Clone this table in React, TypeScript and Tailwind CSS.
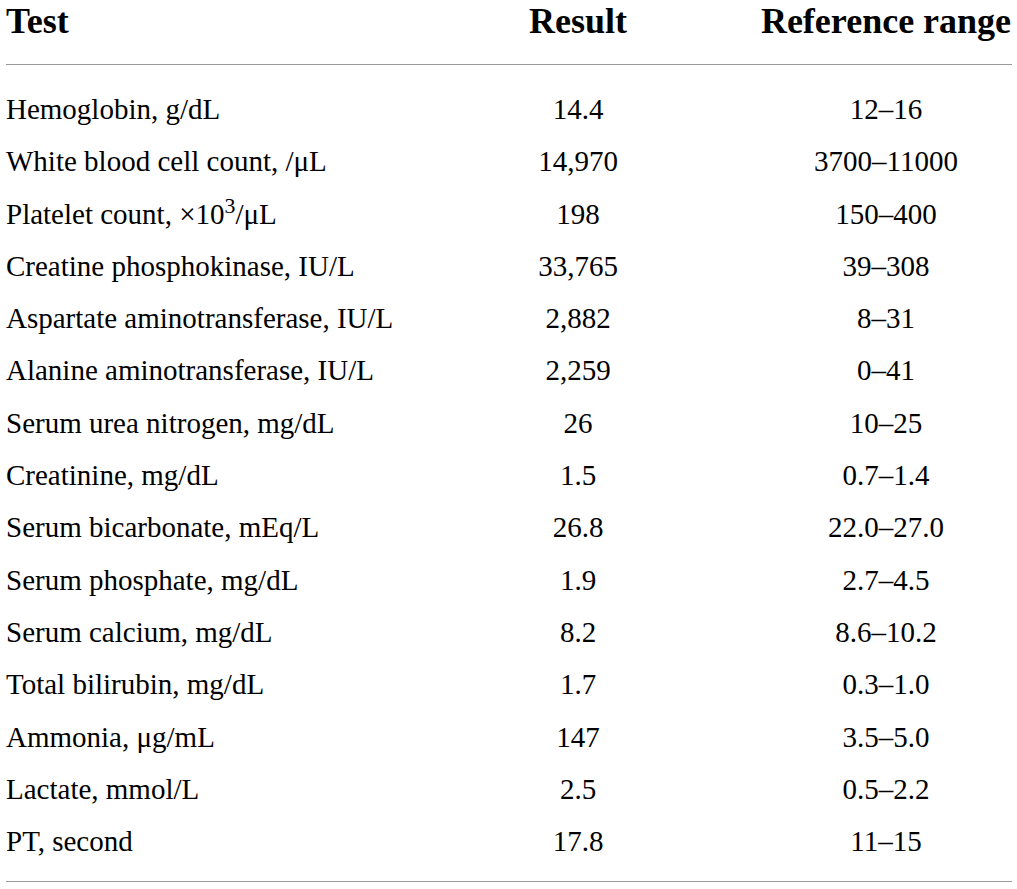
import React from "react";

const rows: [React.ReactNode, string, string][] = [
  ["Hemoglobin, g/dL", "14.4", "12–16"],
  ["White blood cell count, /μL", "14,970", "3700–11000"],
  [
    <>
      Platelet count, ×10<sup>3</sup>/μL
    </>,
    "198",
    "150–400",
  ],
  ["Creatine phosphokinase, IU/L", "33,765", "39–308"],
  ["Aspartate aminotransferase, IU/L", "2,882", "8–31"],
  ["Alanine aminotransferase, IU/L", "2,259", "0–41"],
  ["Serum urea nitrogen, mg/dL", "26", "10–25"],
  ["Creatinine, mg/dL", "1.5", "0.7–1.4"],
  ["Serum bicarbonate, mEq/L", "26.8", "22.0–27.0"],
  ["Serum phosphate, mg/dL", "1.9", "2.7–4.5"],
  ["Serum calcium, mg/dL", "8.2", "8.6–10.2"],
  ["Total bilirubin, mg/dL", "1.7", "0.3–1.0"],
  ["Ammonia, μg/mL", "147", "3.5–5.0"],
  ["Lactate, mmol/L", "2.5", "0.5–2.2"],
  ["PT, second", "17.8", "11–15"],
];

export default function App() {
  return (
    <div
      className="w-[1017px] h-[889px] bg-white text-black pl-[6px] pr-[5px]"
      style={{ fontFamily: '"Liberation Serif", "Times New Roman", serif' }}
    >
      <div className="grid grid-cols-[424px_296px_286px] pt-[1px] pb-[23px] border-b border-[#9a9a9a] text-[36px] leading-[40px] font-bold">
        <div>Test</div>
        <div className="text-center">Result</div>
        <div className="text-center pl-[34px] whitespace-nowrap">Reference range</div>
      </div>
      <div className="pt-[18px] pb-[14px] border-b border-[#9a9a9a] text-[29px] leading-[52.3px]">
        {rows.map((r, i) => (
          <div key={i} className="grid grid-cols-[424px_296px_286px]">
            <div className="whitespace-nowrap">{r[0]}</div>
            <div className="text-center">{r[1]}</div>
            <div className="text-center pl-[34px]">{r[2]}</div>
          </div>
        ))}
      </div>
    </div>
  );
}
